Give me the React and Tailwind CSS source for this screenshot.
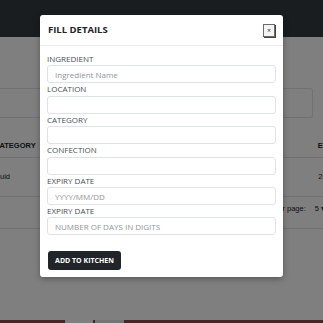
import React from "react";

function Field({ label, placeholder }) {
  return (
    <div className="flex flex-col">
      <label className="text-[8px] leading-[12.4px] text-[#495057] uppercase">{label}</label>
      <input
        className="h-[18px] w-full rounded-[3px] border border-[#dfe3e7] bg-white px-[7px] text-[8px] text-[#495057] outline-none placeholder:text-[#8f959b]"
        placeholder={placeholder}
      />
    </div>
  );
}

export default function App() {
  return (
    <div className="relative h-[323px] w-[323px] overflow-hidden bg-white" style={{ fontFamily: '"Open Sans", sans-serif' }}>
      {/* background page */}
      <div className="flex h-full flex-col" style={{ fontFamily: '"Liberation Sans", Arial, sans-serif' }}>
        <div className="h-[37px] shrink-0 bg-[#343a40]" />
        <div className="mt-[51px] h-[30px] w-[313px] shrink-0 rounded-r-[3px] border-y border-r border-[#dee2e6]" />
        <div className="mt-[16px] flex h-[24px] shrink-0 items-center border-b border-[#dee2e6] text-[7.5px] font-bold text-[#212529]">
          <span className="ml-[-6px] shrink-0 whitespace-nowrap">CATEGORY</span>
          <span className="ml-auto mr-[-22px] shrink-0 whitespace-nowrap">EXPIRY</span>
        </div>
        <div className="flex h-[39px] shrink-0 items-center border-b border-[#dee2e6] text-[7.5px] text-[#212529]">
          <span className="ml-[-10px] shrink-0 whitespace-nowrap">Liquid</span>
          <span className="ml-auto mr-[-12px] shrink-0 whitespace-nowrap">2021</span>
        </div>
        <div className="flex h-[32px] shrink-0 items-start justify-end border-b border-[#dee2e6] pt-[6px] text-[7.5px] text-[#212529]">
          <span className="mr-[9px] whitespace-nowrap">Rows per page:</span>
          <span className="mr-[-2px] shrink-0 whitespace-nowrap">5 ▾</span>
        </div>
        <div className="flex-1" />
        <div className="flex h-[3px] shrink-0 bg-[#8c4d4d]">
          <div className="ml-[65px] w-[28px] bg-[#ffffff]" />
          <div className="ml-[2px] w-[29px] bg-[#e8e8e8]" />
        </div>
      </div>

      {/* overlay */}
      <div className="absolute inset-0 bg-black/50" />

      {/* modal */}
      <div className="absolute left-[40px] top-[15px] w-[243px] rounded-[3px] bg-white shadow-[0_2px_6px_rgba(0,0,0,0.3)]">
        <div className="flex h-[31px] items-center justify-between border-b border-[#e9ecef] pl-[8px] pr-[8px]">
          <h5 className="text-[9.5px] font-bold text-[#212529]">FILL DETAILS</h5>
          <button className="flex h-[13px] w-[12px] items-center justify-center border border-[#6b6b6b] bg-[#f4f4f4] text-[7px] leading-none text-[#333] shadow-[1px_1px_0_#444]">×</button>
        </div>
        <div className="flex flex-col px-[7px] pb-[7px] pt-[7px]">
          <Field label="Ingredient" placeholder="Ingredient Name" />
          <Field label="Location" placeholder="" />
          <Field label="Category" placeholder="" />
          <Field label="Confection" placeholder="" />
          <Field label="Expiry Date" placeholder="YYYY/MM/DD" />
          <Field label="Expiry Date" placeholder="NUMBER OF DAYS IN DIGITS" />
          <div className="mt-[16px] flex">
            <button className="ml-[1px] block h-[19px] w-[73px] rounded-[3px] bg-[#212529] text-[7px] font-bold text-white">ADD TO KITCHEN</button>
          </div>
        </div>
      </div>
    </div>
  );
}
